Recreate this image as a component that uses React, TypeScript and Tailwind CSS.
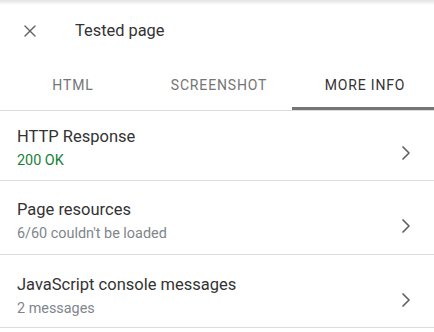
import { ChevronRight, X } from 'lucide-react'

const rows = [
    { title: 'HTTP Response', sub: '200 OK', ok: true, cls: 'h-[70px] pt-[14px]' },
    { title: 'Page resources', sub: "6/60 couldn't be loaded", cls: 'h-[74px] pt-[17px]' },
    { title: 'JavaScript console messages', sub: '2 messages', cls: 'h-[73px] pt-[18px]' },
]

const tabs = ['HTML', 'SCREENSHOT', 'MORE INFO']

export default function App() {
    return (
        <div className="w-[434px] h-[332px] overflow-hidden bg-white font-['Roboto',sans-serif] text-[#202124]">
            {/* top shadow */}
            <div className="h-[5px] bg-gradient-to-b from-[#e3e3e3] to-white" />

            <div className="h-[57px] flex items-center pl-[20px] pb-[5px]">
                <X size={20} strokeWidth={1.6} className="text-[#5f6368]" />
                <span className="ml-[35px] text-[16.4px] text-[#333]">Tested page</span>
            </div>

            <div className="flex w-[438px] h-[49px] border-b border-[#dadce0]">
                {tabs.map((t, i) => (
                    <div
                        key={t}
                        className={`w-[146px] flex items-center justify-center text-[14px] tracking-[0.06em] ${
                            i === 2 ? 'text-[#333] border-b-[3px] border-[#757575] pt-[2px]' : 'text-[#757575] pb-[1px]'
                        }`}
                    >
                        {t}
                    </div>
                ))}
            </div>

            <div>
                {rows.map((r) => (
                    <div key={r.title} className={`${r.cls} flex justify-between pl-[17px] pr-[16px] border-b border-[#dadce0]`}>
                        <div className="flex flex-col">
                            <span className="text-[16.5px] leading-[24px] text-[#333]">{r.title}</span>
                            <span className={`text-[14.4px] leading-[24px] ${r.ok ? 'text-[#188038]' : 'text-[#80868b]'}`}>{r.sub}</span>
                        </div>
                        <ChevronRight size={24} strokeWidth={1.7} className="text-[#5f6368] self-center" />
                    </div>
                ))}
            </div>
        </div>
    )
}
